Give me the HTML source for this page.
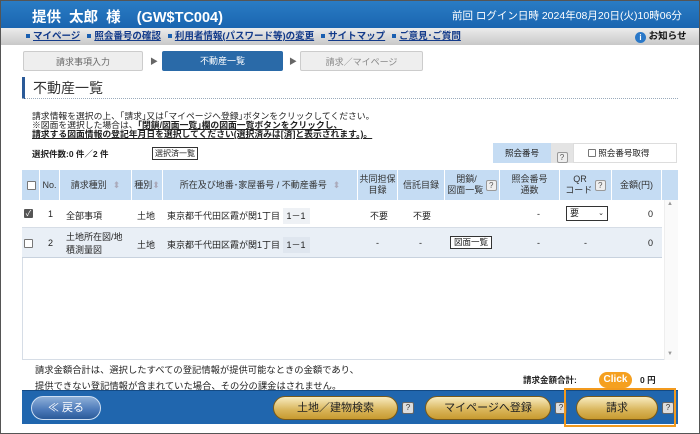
<!DOCTYPE html>
<html><head><meta charset="utf-8"><style>
*{box-sizing:border-box;margin:0;padding:0}
body{width:700px;height:434px;overflow:hidden;background:#fff;font-family:"Liberation Sans","Noto Sans CJK JP",sans-serif;position:relative;color:#222}
.a{position:absolute;white-space:nowrap}
.frame{position:absolute;left:0;top:0;width:700px;height:434px;border:1px solid #555}
.hdr{left:1px;top:1px;width:698px;height:27px;background:linear-gradient(#2a7cc4,#1a65b0)}
.nav{left:1px;top:28px;width:698px;height:17px;background:linear-gradient(#ececec,#c8c8c8);font-size:9.5px;line-height:17px;color:#123a8a;font-weight:bold}
.nav span{text-decoration:underline;margin-right:7px}
.nav i{display:inline-block;width:4px;height:4px;background:#1a5fb0;margin-right:3px;vertical-align:1px}
.step{top:51px;height:20px;font-size:9px;line-height:20px;text-align:center;border-radius:2px}
.q{display:inline-block;width:11px;height:11px;border:1px solid #999;border-radius:2px;background:#eee;font-size:8px;line-height:9px;text-align:center;color:#555}
.th{position:absolute;top:170px;height:30px;font-size:9px;color:#333;display:flex;align-items:center;justify-content:center;text-align:center;line-height:11px;border-right:1px solid #fff}
.cb{display:inline-block;width:9px;height:9px;border:1px solid #777;background:#fff;border-radius:1px}
.btn{position:absolute;top:396px;height:24px;border-radius:12px;background:linear-gradient(#f8ecc0,#d8b458 60%,#c89a30);border:1px solid #7a5a18;font-size:11px;text-align:center;line-height:22px;color:#222}
.qq{position:absolute;top:402px;width:12px;height:12px;border-radius:2px;background:#ddd;border:1px solid #666;font-size:8px;line-height:10px;text-align:center;color:#333}
</style></head><body>
<div class="a hdr"></div>
<div class="a" style="left:32px;top:6px;color:#fff;font-size:14.5px;font-weight:bold;">提供&nbsp;&nbsp;太郎&nbsp;&nbsp;様&nbsp;&nbsp;&nbsp;&nbsp;(GW$TC004)</div>
<div class="a" style="left:452px;top:8px;color:#fff;font-size:10.5px;">前回 ログイン日時 2024年08月20日(火)10時06分</div>
<div class="a nav"><div style="position:absolute;left:25px;top:0"><i></i><span>マイページ</span><i></i><span>照会番号の確認</span><i></i><span>利用者情報(パスワード等)の変更</span><i></i><span>サイトマップ</span><i></i><span>ご意見･ご質問</span></div>
<div style="position:absolute;left:634px;top:0;color:#111"><b style="display:inline-block;width:11px;height:11px;border-radius:50%;background:#2a78c8;color:#fff;font-size:8px;line-height:11px;text-align:center;vertical-align:-1px">i</b> お知らせ</div></div>
<div class="a step" style="left:23px;width:120px;background:#eee;border:1px solid #ccc;color:#666">請求事項入力</div>
<div class="a" style="left:150px;top:56px;font-size:8px;color:#666">▶</div>
<div class="a step" style="left:162px;width:121px;background:#2a6aa8;color:#fff">不動産一覧</div>
<div class="a" style="left:289px;top:56px;font-size:8px;color:#666">▶</div>
<div class="a step" style="left:300px;width:123px;background:#eee;border:1px solid #ccc;color:#888">請求／マイページ</div>
<div class="a" style="left:22px;top:77px;width:3px;height:22px;background:#2a5a98"></div>
<div class="a" style="left:33px;top:78px;font-size:14px;color:#333">不動産一覧</div>
<div class="a" style="left:22px;top:98px;width:656px;border-top:1px dotted #9ab"></div>
<div class="a" style="left:32px;top:109px;font-size:8.8px">請求情報を選択の上、｢請求｣又は｢マイページへ登録｣ボタンをクリックしてください。</div>
<div class="a" style="left:32px;top:121px;font-size:8.8px;line-height:9px">※図面を選択した場合は、<b style="text-decoration:underline">｢閉鎖/図面一覧｣欄の図面一覧ボタンをクリックし、</b><br><b style="text-decoration:underline;color:#222">請求する図面情報の登記年月日を選択してください(選択済みは[済]と表示されます。)。</b></div>
<div class="a" style="left:32px;top:148px;font-size:8.5px;font-weight:bold;color:#222">選択件数:0 件／2 件</div>
<div class="a" style="left:152px;top:147px;font-size:8px;border:1px solid #333;padding:0 2px;line-height:11px">選択済一覧</div>
<div class="a" style="left:493px;top:143px;width:58px;height:20px;background:#c5dcf3;font-size:8.5px;line-height:20px;text-align:center">照会番号</div>
<div class="a" style="left:551px;top:143px;width:22px;height:20px;background:#e4e4e4;text-align:center;padding-top:4px"><span class="q">?</span></div>
<div class="a" style="left:573px;top:143px;width:104px;height:20px;border:1px solid #ddd;font-size:8.5px;line-height:18px;padding-left:14px"><span class="cb" style="width:8px;height:8px;vertical-align:-1px"></span> 照会番号取得</div>
<div class="a" style="left:22px;top:170px;width:656px;height:190px;border:1px solid #d6dde6"></div>
<div class="a" style="left:22px;top:170px;width:656px;height:30px;background:#c5dcf3"></div>
<div class="th" style="left:24px;width:16px"><span class="cb"></span></div>
<div class="th" style="left:40px;width:20px">No.</div>
<div class="th" style="left:60px;width:72px">請求種別 <span style="color:#aab;margin-left:6px">⬍</span></div>
<div class="th" style="left:132px;width:31px">種別<span style="color:#aab">⬍</span></div>
<div class="th" style="left:163px;width:195px">所在及び地番･家屋番号 / 不動産番号 <span style="color:#aab;margin-left:6px">⬍</span></div>
<div class="th" style="left:358px;width:40px">共同担保<br>目録</div>
<div class="th" style="left:398px;width:47px">信託目録</div>
<div class="th" style="left:445px;width:55px">閉鎖/<br>図面一覧&nbsp;<span class="q">?</span></div>
<div class="th" style="left:500px;width:60px">照会番号<br>通数</div>
<div class="th" style="left:560px;width:52px">QR<br>コード&nbsp;<span class="q">?</span></div>
<div class="th" style="left:612px;width:50px">金額(円)</div>
<div class="a" style="left:22px;top:200px;width:640px;height:28px;background:#fff;border-bottom:1px solid #d6dde6"></div>
<div class="a" style="left:22px;top:228px;width:640px;height:30px;background:#e9eff6;border-bottom:1px solid #c8d2de"></div>
<div class="a" style="left:24px;top:209px;width:9px;height:9px;background:#555;border-radius:1px;color:#fff;font-size:8px;line-height:9px;text-align:center">✓</div>
<div class="a" style="left:48px;top:209px;font-size:9px">1</div>
<div class="a" style="left:66px;top:209px;font-size:9px">全部事項</div>
<div class="a" style="left:137px;top:209px;font-size:9px">土地</div>
<div class="a" style="left:167px;top:209px;font-size:9px">東京都千代田区霞が関1丁目 <span style="background:#eef1f5;padding:3px 4px">1－1</span></div>
<div class="a" style="left:370px;top:209px;font-size:9px">不要</div>
<div class="a" style="left:413px;top:209px;font-size:9px">不要</div>
<div class="a" style="left:537px;top:209px;font-size:9px">-</div>
<div class="a" style="left:566px;top:206px;width:42px;height:15px;border:1px solid #333;background:#fff;font-size:9px;line-height:13px;padding-left:3px">要<span style="position:absolute;right:3px;font-size:7px">⌄</span></div>
<div class="a" style="left:648px;top:209px;font-size:9px">0</div>
<span class="a cb" style="left:24px;top:239px"></span>
<div class="a" style="left:48px;top:238px;font-size:9px">2</div>
<div class="a" style="left:66px;top:231px;font-size:9px;line-height:13px">土地所在図/地<br>積測量図</div>
<div class="a" style="left:137px;top:238px;font-size:9px">土地</div>
<div class="a" style="left:167px;top:238px;font-size:9px">東京都千代田区霞が関1丁目 <span style="background:#dfe6ef;padding:3px 4px">1－1</span></div>
<div class="a" style="left:376px;top:238px;font-size:9px">-</div>
<div class="a" style="left:419px;top:238px;font-size:9px">-</div>
<div class="a" style="left:450px;top:236px;font-size:8.5px;border:1px solid #333;background:#fff;padding:0 3px;line-height:11px">図面一覧</div>
<div class="a" style="left:537px;top:238px;font-size:9px">-</div>
<div class="a" style="left:584px;top:238px;font-size:9px">-</div>
<div class="a" style="left:648px;top:238px;font-size:9px">0</div>
<div class="a" style="left:664px;top:200px;width:14px;height:160px;background:#fafafa;border-left:1px solid #eee"></div>
<div class="a" style="left:667px;top:201px;font-size:6px;color:#999">▲</div>
<div class="a" style="left:667px;top:351px;font-size:6px;color:#999">▼</div>
<div class="a" style="left:35px;top:362px;font-size:9.3px;line-height:16px">請求金額合計は、選択したすべての登記情報が提供可能なときの金額であり、<br>提供できない登記情報が含まれていた場合、その分の課金はされません。</div>
<div class="a" style="left:523px;top:374px;font-size:8.5px;font-weight:bold">請求金額合計:</div>
<div class="a" style="left:640px;top:374px;font-size:8.5px;font-weight:bold">0 円</div>
<div class="a" style="left:22px;top:390px;width:656px;height:34px;background:#2066ae;border-top:1px solid #134a84"></div>
<div class="a" style="left:31px;top:396px;width:70px;height:24px;border-radius:12px;background:linear-gradient(#8fb0d8,#4a78b8 60%,#2b5a98);border:1px solid #cfe0f4;color:#fff;font-size:11px;line-height:22px;text-align:center">≪ 戻る</div>
<div class="btn" style="left:273px;width:125px">土地／建物検索</div>
<div class="qq" style="left:402px">?</div>
<div class="btn" style="left:425px;width:126px">マイページへ登録</div>
<div class="qq" style="left:555px">?</div>
<div class="btn" style="left:576px;width:82px">請求</div>
<div class="qq" style="left:662px">?</div>
<div class="a" style="left:564px;top:388px;width:112px;height:39px;border:2px solid #f29a1e"></div>
<div class="a" style="left:599px;top:372px;width:33px;height:16px;border-radius:8px;background:#f5a020;color:#fff;font-size:10px;font-weight:bold;text-align:center;line-height:16px">Click</div>
<div class="frame"></div>
</body></html>
